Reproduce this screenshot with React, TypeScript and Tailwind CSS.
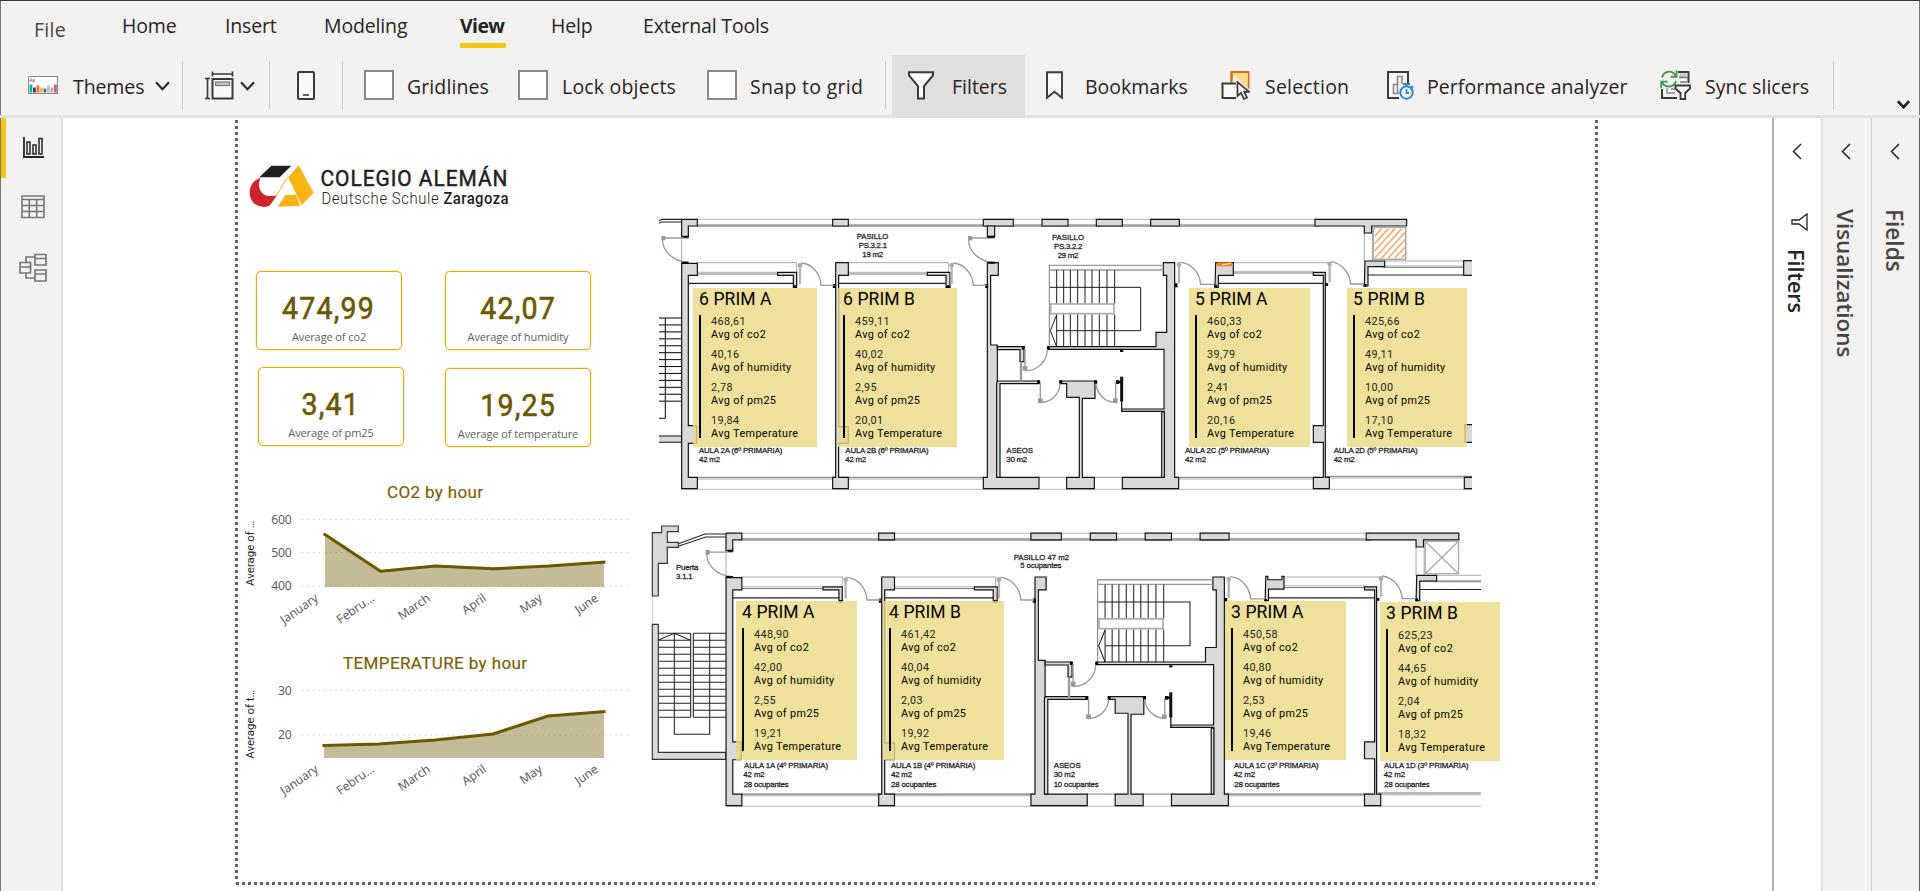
import React from "react";

/* ---------- shared drawing helpers ---------- */

const DARK = "#3b3a39";

function Chevron({ className, w = 2 }: { className?: string; w?: number }) {
  return (
    <svg viewBox="0 0 15 10" className={className} fill="none" stroke="#252423" strokeWidth={w}>
      <path d="M1 1.2 L7.5 8.2 L14 1.2" />
    </svg>
  );
}

function Sep({ className }: { className: string }) {
  return <div className={`h-12 w-px shrink-0 bg-[#c8c6c4] ${className}`} />;
}

function Check({ className = "" }: { className?: string }) {
  return <div className={`h-[30px] w-[30px] shrink-0 border-2 border-[#8a8886] bg-white ${className}`} />;
}

function Label({ className, children }: { className: string; children: React.ReactNode }) {
  return <span className={`shrink-0 whitespace-nowrap ${className}`}>{children}</span>;
}

function ToolLabel({ className, children }: { className: string; children: React.ReactNode }) {
  return <span className={`shrink-0 pt-[3px] whitespace-nowrap ${className}`}>{children}</span>;
}

/* ---------- ribbon ---------- */

function ThemesIcon() {
  const bars: [number, number, string][] = [
    [1.5, 8, "#01b8aa"],
    [5, 5, "#374649"],
    [8.5, 7, "#fd625e"],
    [12, 5, "#f2c80f"],
    [15.5, 4, "#5f6b6d"],
    [19, 7, "#8ad4eb"],
    [22.5, 5, "#fe9666"],
    [26, 8, "#a66999"],
  ];
  return (
    <svg viewBox="0 0 30 18" className="ml-7 h-[18px] w-[30px] shrink-0">
      <rect x="0.5" y="0.5" width="29" height="17" fill="#fff" stroke="#8a8886" />
      <text x="1" y="6" fontSize="5" fill="#605e5c" fontFamily="Liberation Sans, sans-serif">Aa</text>
      {bars.map(([x, h, c]) => (
        <rect key={x} x={x} y={16.5 - h} width="2.8" height={h} fill={c} />
      ))}
    </svg>
  );
}

function PageViewIcon() {
  return (
    <svg viewBox="0 0 29 29" className="ml-[22px] h-[29px] w-[29px] shrink-0" fill="none" stroke={DARK} strokeWidth="2">
      <rect x="7.5" y="8" width="20" height="19.5" fill="#fafafa" />
      <rect x="10.5" y="11" width="14" height="3.5" fill="#c8c6c4" stroke="#797775" strokeWidth="1.2" />
      <path d="M7 3H28M7.5 0.5V5.5M27.5 0.5V5.5M2.5 8V27.5M0 7.5H5M0 27.5H5" strokeWidth="1.7" />
    </svg>
  );
}

function PhoneIcon() {
  return (
    <svg viewBox="0 0 18 29" className="ml-[27px] h-[29px] w-[18px] shrink-0" fill="none" stroke={DARK} strokeWidth="2">
      <rect x="1" y="1" width="16" height="27" rx="1" fill="#fafafa" />
      <path d="M6 24H12" strokeWidth="1.6" />
    </svg>
  );
}

function FunnelIcon() {
  return (
    <svg viewBox="0 0 26 29" className="ml-4 h-[29px] w-[26px] shrink-0" fill="#fafafa" stroke={DARK} strokeWidth="2">
      <path d="M1 1.2H25V4.5L16 15.2V27.5H10V15.2L1 4.5Z" />
    </svg>
  );
}

function BookmarkIcon() {
  return (
    <svg viewBox="0 0 17 29" className="ml-[21px] h-[29px] w-[17px] shrink-0" fill="#fafafa" stroke={DARK} strokeWidth="1.9">
      <path d="M1 1.2H16V26.8L8.5 20.8L1 26.8Z" />
    </svg>
  );
}

function SelectionIcon() {
  return (
    <svg viewBox="0 0 29 30" className="h-[30px] w-[29px] shrink-0">
      <rect x="10.5" y="2" width="17" height="17" fill="#f8db8f" stroke="#d8700d" strokeWidth="2" />
      <path d="M10 14L14 4L29 20L29 30H14Z" fill="#f3f2f1" />
      <path d="M10.5 13V2H15" fill="none" stroke="#d8700d" strokeWidth="2" />
      <path d="M11.5 3H27L26.5 18.5Z" fill="#f8db8f" />
      <rect x="1.5" y="13.5" width="15" height="14.5" fill="#fafafa" stroke={DARK} strokeWidth="2" />
      <path d="M15 10L29.5 25L24 30H15Z" fill="#f3f2f1" />
      <path d="M16.5 12V26L20 22.8L23 29L26 27.6L23.2 21.8H28Z" fill="#fafafa" stroke={DARK} strokeWidth="1.7" />
    </svg>
  );
}

function PerformanceIcon() {
  return (
    <svg viewBox="0 0 27 30" className="h-[30px] w-[27px] shrink-0" fill="none">
      <path d="M12 28H1V2H21V13" fill="#fafafa" stroke={DARK} strokeWidth="2" />
      <path d="M12 23.5H6.5V14.5H10.5M10.5 23V6.5H15V14" stroke="#8a8886" strokeWidth="1.6" />
      <circle cx="19.5" cy="22.5" r="6.2" fill="#fafafa" stroke="#2488c8" strokeWidth="2" />
      <path d="M16 14H23M19.5 14V16M24 16L26 18M19.5 19V23H22" stroke="#2488c8" strokeWidth="1.8" />
    </svg>
  );
}

function SyncIcon() {
  return (
    <svg viewBox="0 0 31 30" className="h-[30px] w-[31px] shrink-0" fill="none">
      <path d="M18 2H28.5V13M2 19V28H17" stroke={DARK} strokeWidth="2" />
      <path d="M20 3.5H27.5V7H20Z" fill="#c8c6c4" />
      <path d="M19 7.5H28M20 12H27" stroke="#797775" strokeWidth="1.5" />
      <path d="M7 18.5V23H15M11 19H15" stroke="#8a8886" strokeWidth="1.5" />
      <path d="M2 7.5C4 0.5 12 -0.5 16 6M16.5 0.5V6.8H10.5" stroke="#3a9a50" strokeWidth="1.9" />
      <path d="M16 11C14 17.5 6 18.5 2 12.5M1.2 17.8V11.6H7.5" stroke="#3a9a50" strokeWidth="1.9" />
      <path d="M15.5 15.5H30V18.5L25.2 23V29H20.5V23L15.5 18.5Z" fill="#fafafa" stroke={DARK} strokeWidth="1.9" />
    </svg>
  );
}

function Ribbon() {
  return (
    <header className="h-[118px] shrink-0 border-t border-[#3b3a39] bg-[#f3f2f1] text-[#252423] shadow-[inset_1px_0_#797775,inset_-1px_0_#797775]">
      <nav className="flex h-[54px] text-[19.5px] leading-[27px] tracking-[-0.15px]">
        <Label className="mt-[14.5px] ml-[34px] w-[88px] tracking-[0.3px] text-[#484644]">File</Label>
        <Label className="mt-[11px] w-[103px]">Home</Label>
        <Label className="mt-[11px] w-[99px]">Insert</Label>
        <Label className="mt-[11px] w-[136px]">Modeling</Label>
        <div className="mt-[11px] mr-[45px] flex w-[46px] shrink-0 flex-col">
          <Label className="font-bold tracking-[-0.6px]">View</Label>
          <div className="mt-1 h-[5px] bg-[#f2c811]" />
        </div>
        <Label className="mt-[11px] w-[92px]">Help</Label>
        <Label className="mt-[11px]">External Tools</Label>
      </nav>
      <div className="flex h-[60px] items-center text-[19.5px] tracking-[0px]">
        <ThemesIcon />
        <ToolLabel className="ml-[15px] w-[82px] tracking-[-0.1px]">Themes</ToolLabel>
        <Chevron className="mt-[2px] h-[10px] w-[15px] shrink-0" />
        <Sep className="ml-3" />
        <PageViewIcon />
        <Chevron className="mt-[2px] ml-1.5 h-[10px] w-[15px] shrink-0" />
        <Sep className="ml-3.5" />
        <PhoneIcon />
        <Sep className="ml-[27px]" />
        <Check className="ml-[21px]" />
        <ToolLabel className="ml-[13px] w-[111px] tracking-[0.1px]">Gridlines</ToolLabel>
        <Check />
        <ToolLabel className="ml-3.5 w-[145px] tracking-[0.2px]">Lock objects</ToolLabel>
        <Check />
        <ToolLabel className="ml-[13px] w-[135px] tracking-[0.3px]">Snap to grid</ToolLabel>
        <Sep className="" />
        <div className="ml-1.5 flex h-full w-[133px] shrink-0 items-center bg-[#e1dfdd]">
          <FunnelIcon />
          <ToolLabel className="ml-[18px]">Filters</ToolLabel>
        </div>
        <BookmarkIcon />
        <ToolLabel className="ml-[22px] w-[136px]">Bookmarks</ToolLabel>
        <SelectionIcon />
        <ToolLabel className="ml-[15px] w-[122px] tracking-[0.2px]">Selection</ToolLabel>
        <PerformanceIcon />
        <ToolLabel className="ml-[13px] w-[233px] tracking-[0.05px]">Performance analyzer</ToolLabel>
        <SyncIcon />
        <ToolLabel className="ml-3.5 w-[128px] tracking-[0.05px]">Sync slicers</ToolLabel>
        <Sep className="" />
        <Chevron w={3.2} className="mt-[39px] ml-[63px] h-[9px] w-[13px] shrink-0" />
      </div>
      <div className="h-[3px] bg-[#e4e2e0]" />
    </header>
  );
}

/* ---------- left rail ---------- */

function Rail() {
  return (
    <aside className="flex w-[63px] shrink-0 border-r-2 border-[#e1dfdd] bg-[#f3f2f1] shadow-[inset_1px_0_#797775]">
      <div className="ml-px h-[60px] w-[5px] bg-[#f2c811]" />
      <div className="flex w-[54px] flex-col items-center">
        <svg viewBox="0 0 21 21" className="mt-[19px] h-[21px] w-[21px]" fill="none" stroke="#252423" strokeWidth="1.5">
          <path d="M1 0V20H21" strokeWidth="1.8" />
          <rect x="4" y="5" width="3" height="12" />
          <rect x="10" y="8" width="3" height="9" />
          <rect x="16" y="1.5" width="3" height="15.5" />
        </svg>
        <svg viewBox="0 0 24 24" className="mt-[37px] h-[24px] w-[24px]" fill="none" stroke="#797775" strokeWidth="1.6">
          <path d="M1 1H23V22.5H1ZM1 4.5H23M1 10.5H23M1 16.5H23M8.3 4.5V22.5M15.7 4.5V22.5" />
        </svg>
        <svg viewBox="0 0 28 29" className="mt-[34px] h-[29px] w-[28px]" fill="none" stroke="#797775" strokeWidth="1.7">
          <path d="M1 9.5H11.5V20H1ZM1 14H11.5M16 1.5H27V12H16ZM16 5.5H27M16 17H27V28H16ZM16 21H27M7 9.5V4H16M7 20V25H16" />
        </svg>
      </div>
    </aside>
  );
}

/* ---------- left column of the report ---------- */

function Logo() {
  return (
    <svg viewBox="238 118 402 153" className="h-[153px] w-[402px]" fontFamily="Roboto, sans-serif">
      <g transform="translate(230 140) scale(0.33333)">
        <path d="M124 77H184L149 112H88Z" fill="#231f20" />
        <path d="M92 113C70 120 59 139 59 158C60 184 78 201 102 201C112 200 117 198 121 194L142 164C132 170 114 169 104 165C88 156 82 134 92 113Z" fill="#d2232a" />
        <path d="M206 76L251 158L215 196L174 112Z" fill="#fcb415" />
        <path d="M172 113L140 166" stroke="#fcb415" strokeWidth="3" />
        <path d="M166 165H198L211 198L143 200Z" fill="#fcb415" />
      </g>
      <g transform="translate(320.5 186) scale(0.93 1)">
        <text fontSize="22.5" fill="#231f20" stroke="#231f20" strokeWidth="0.5" textLength="201">COLEGIO ALEMÁN</text>
      </g>
      <g transform="translate(321.5 204) scale(0.93 1)">
        <text fontSize="16" fontWeight="300" fill="#231f20" textLength="126">Deutsche Schule</text>
      </g>
      <g transform="translate(443.5 204) scale(0.93 1)">
        <text fontSize="16" fontWeight="500" fill="#231f20" textLength="70">Zaragoza</text>
      </g>
    </svg>
  );
}

function Kpi({ value, label, className = "" }: { value: string; label: string; className?: string }) {
  return (
    <div
      className={`flex h-[79px] w-[146px] flex-col items-center rounded-[5px] border border-[#d9b300] shadow-[0_0_1.5px_#d9b300] ${className}`}
    >
      <span className="mt-[18.5px] scale-x-[0.92] font-[Roboto] text-[31px] leading-[36px] tracking-[1.3px] text-[#6b5800] [-webkit-text-stroke:0.6px_#6b5800]">
        {value}
      </span>
      <span className="mt-[2px] text-[11px] leading-[16px] tracking-[-0.1px] whitespace-nowrap text-[#605e5c]">{label}</span>
    </div>
  );
}

type Pt = [number, number];

function AreaChart({
  title,
  x1,
  x2,
  axis,
  ticks,
  points,
  base,
  top,
  labelY,
}: {
  title: string;
  x1: number;
  x2: number;
  axis: string;
  ticks: { y: number; text: string }[];
  points: Pt[];
  base: number;
  top: number;
  labelY: number;
}) {
  const line = points.map((p) => p.join(",")).join(" ");
  const months = ["January", "Febru…", "March", "April", "May", "June"];
  const mid = (ticks[0].y + base) / 2;
  return (
    <svg viewBox={`238 ${top} 402 171`} className="h-[171px] w-[402px]" fontFamily="Noto Sans, sans-serif">
      <text x={x1} y={top + 39} fontSize="17" textLength={x2 - x1} fill="#7a6200" stroke="#7a6200" strokeWidth="0.2" fontFamily="Roboto, sans-serif">
        {title}
      </text>
      {ticks.map((t) => (
        <g key={t.text}>
          <line x1="302" x2="628" y1={t.y} y2={t.y} stroke="#c8c6c4" strokeWidth="1" strokeDasharray="1.2 4.4" />
          <text x="291.5" y={t.y + 4.2} fontSize="12.2" textAnchor="end" letterSpacing="-0.2" fill="#605e5c">
            {t.text}
          </text>
        </g>
      ))}
      <polygon points={`${points[0][0]},${base} ${line} ${points[5][0]},${base}`} fill="#6b5800" fillOpacity="0.4" />
      <polyline points={line} fill="none" stroke="#6b5800" strokeWidth="3" strokeLinecap="square" strokeLinejoin="round" />
      {months.map((m, i) => (
        <text
          key={m}
          x={319 + i * 56}
          y={labelY}
          fontSize="12.2"
          textAnchor="end"
          letterSpacing="-0.1"
          fill="#605e5c"
          transform={`rotate(-35 ${319 + i * 56} ${labelY})`}
        >
          {m}
        </text>
      ))}
      <text x="253.5" y={mid} fontSize="11.5" textAnchor="middle" fill="#252423" fontFamily="Roboto, sans-serif" transform={`rotate(-90 253.5 ${mid})`}>
        {axis}
      </text>
    </svg>
  );
}

/* ---------- floor plans ---------- */

function PlanText({ x1, x2, y, children }: { x1: number; x2: number; y: number; children: string }) {
  return (
    <text x={x1} y={y} textLength={x2 - x1} fontSize="23.5" fill="#222" stroke="#222" strokeWidth="0.8" fontFamily="Liberation Sans, sans-serif">
      {children}
    </text>
  );
}

function Stairs() {
  const xs = [1250, 1271, 1291, 1313, 1335, 1356, 1378, 1401, 1424];
  return (
    <g fill="none" stroke="#1a1a1a" strokeWidth="3">
      <path d="M1228 440V195" stroke="#777" />
      <path d="M1228 196H1570M1228 210H1570" stroke="#999" strokeWidth="4" />
      {xs.map((x) => (
        <path key={x} d={`M${x} 210V311M${x} 343V440`} />
      ))}
      <path d="M1230 262H1502V392H1250" />
      <path d="M1250 345L1231 392L1250 440" />
      <rect x="1232" y="312" width="190" height="29" fill="#fff" stroke="#aaa" strokeWidth="5" />
    </g>
  );
}

function Door({ x, y, h, arc }: { x: number; y: number; h: number; arc: string }) {
  return (
    <g fill="none" stroke="#999" strokeWidth="4">
      <path d={`M${x} ${y}V${y + h}`} strokeWidth="7" stroke="#b5b5b5" />
      <path d={arc} />
      <circle cx={x} cy={y + 6} r="7" fill="#aaa" stroke="none" />
    </g>
  );
}

/* One storey of the building: both floors share this layout. */
function Storey({ upper }: { upper: boolean }) {
  return (
    <g strokeLinejoin="miter">
      {/* façade lines */}
      <g fill="none" stroke="#aaa" strokeWidth="3">
        <path d="M170 58H2040M125 868H2500" stroke="#b5b5b5" />
        <path d="M170 74H2040" />
        <path d="M170 78H2040" stroke="#555" />
        <path d="M170 188H470V220M625 188H925V220M1780 188H2068M2230 183H2500" />
        <path d="M172 217H415M625 217H865M1780 214H2022M2230 198H2475" stroke="#b5b5b5" />
        <path d="M172 222H415M625 222H865M1780 219H2022M2230 202H2475" stroke="#777" />
        <path d="M170 832H1035M1604 832H2040M2060 829H2500" stroke="#777" />
        <path d="M170 837H1035M1604 837H2040M2060 834H2500" stroke="#aaa" />
        <path d="M1195 832H1285M1360 832H1450" stroke="#999" />
        <path d="M125 110V190M2173 98V184M2197 78V184" stroke="#aaa" />
      </g>
      <path d="M145 250H460M596 250H918M1735 250H2052M2184 225H2500" fill="none" stroke="#222" strokeWidth="3.5" />

      {/* poché walls */}
      <g fill="#d9d9d9" stroke="#111" strokeWidth="3.5">
        <path d="M125 58H172V78H145V110H125Z" />
        <path d="M578 58H625V78H578Z" />
        <path d="M1030 58H1120V78H1030Z" />
        {upper && <path d="M1042 78H1064V110H1042Z" />}
        <path d="M1206 58H1284V78H1206ZM1369 58H1447V78H1369ZM1532 58H1618V78H1532Z" />
        <path d="M2025 58H2300V78H2195V99H2173V78H2025Z" />
        <path d="M125 190H172V226H145V677H170V730H145V832H172V866H125Z" />
        <path d="M413 217H470V262H460V226H413Z" />
        <path d="M587 188H625V226H596V680H625V730H596V832H625V866H578V832H587Z" />
        <path d="M862 217H930V262H918V226H862Z" />
        <path d="M1042 188H1075V226H1052V435H1072V832H1197V866H1030V832H1042Z" />
        <path d="M1570 188H1604V832H1616V866H1447V832H1572V634H1445V627H1572V448H1225V440H1548V397H1580V226H1570Z" />
        <path d="M1072 440H1152V485H1140V449H1072Z" />
        <path d="M1072 543H1196V551H1080V832H1070V551Z" />
        <path d="M1262 543H1365V595H1327V832H1363V866H1280V832H1318V592H1280V551H1262Z" />
        <path d="M1565 636V832H1573V636Z" />
        {upper ? (
          <path d="M1727 188H1780V226H1735V262H1725Z" />
        ) : (
          <path d="M1727 186H1733V196H1775V186H1781V224H1735V258H1725Z" />
        )}
        <path d="M2020 217H2056V832H2068V866H2020V832H2050V727H2020V677H2050V226H2020Z" />
        <path d="M2175 183H2234V200H2184V258H2173Z" />
        {upper && <path d="M2471 182H2510V226H2471ZM2475 674H2510V727H2475ZM2473 832H2510V866H2473Z" />}
        <path d="M1445 530V605" strokeWidth="9" />
        <path d="M1445 450V456" strokeWidth="10" />
      </g>
      <path d="M1445 605V634" stroke="#222" strokeWidth="4" />
      <path d="M1143 485V545" stroke="#999" strokeWidth="7" />
      <path
        d="M583 252V264M1040 252V264M1196 541V552M1262 541V552M1367 541V552M1432 541V552M1225 439V449M1150 439V449M1608 250V262M2060 250V258M466 256V264M924 256V264M1727 254V262M2175 252V260"
        stroke="#000"
        strokeWidth="9"
      />
      <path d="M1430 546H1446" stroke="#111" strokeWidth="8" />

      <Door x={480} y={190} h={62} arc="M484 189C520 192 542 225 543 256H584" />
      <Door x={935} y={190} h={62} arc="M940 189C976 192 998 225 1000 256H1040" />
      <Door x={1617} y={188} h={62} arc="M1622 187C1658 190 1680 222 1682 253H1722" />
      <Door x={2069} y={186} h={62} arc="M2073 185C2108 190 2130 222 2132 252H2172" />
      <g fill="none" stroke="#999" strokeWidth="4">
        <path d="M68 117C66 150 95 184 145 187M66 114H145" />
        {upper && <path d="M986 117C984 150 1013 184 1060 187M984 114H1064" />}
        <path d="M1155 445V512C1190 514 1222 485 1222 448" />
        <path d="M1201 548V607C1235 608 1260 580 1260 550" />
        <path d="M1368 550C1370 580 1395 608 1427 607V548" />
      </g>
      <g fill="#999">
        <path d="M64 108H77V121H64ZM1148 498H1162V512H1148ZM1194 595H1208V609H1194ZM1419 595H1433V609H1419Z" />
        {upper && <path d="M984 108H997V121H984Z" />}
      </g>
      <path d="M125 188H146M130 110H146" stroke="#000" strokeWidth="6" />
      {upper && <path d="M1045 188H1066M1042 110H1064" stroke="#000" strokeWidth="6" />}
      <Stairs />
    </g>
  );
}

function UpperPlan() {
  const steps = Array.from({ length: 13 }, (_, i) => 354 + i * 20.8);
  const hatch = Array.from({ length: 10 }, (_, i) => i * 20);
  return (
    <svg viewBox="640 210 832 284" className="h-[284px] w-[832px]">
      <defs>
        <clipPath id="hatchBox">
          <rect x="2204" y="86" width="90" height="88" />
        </clipPath>
      </defs>
      <g transform="translate(640 200) scale(0.33333)">
        <path d="M57 70L64 66H125M57 62L66 58H125" fill="none" stroke="#222" strokeWidth="3.5" />
        <g stroke="#111" strokeWidth="3.2" fill="none">
          {steps.map((y) => (
            <path key={y} d={`M57 ${y}H125`} />
          ))}
          <path d="M76 354V655H57" />
          <path d="M57 708H125V727H57" fill="#d9d9d9" />
        </g>
        <Storey upper />
        <rect x="1731" y="187" width="45" height="12" fill="#ff7f0e" />
        <path d="M1746 195L1772 190" stroke="#fff" strokeWidth="3" />
        <rect x="2200" y="82" width="97" height="96" fill="#fff" stroke="#aaa" strokeWidth="5" />
        <g clipPath="url(#hatchBox)" stroke="#fb9b45" strokeWidth="4">
          {hatch.map((d) => (
            <path key={d} d={`M${2194 + d - 80} ${186}L${2194 + d + 20} ${76}`} />
          ))}
        </g>
        <PlanText x1={650} x2={745} y={116}>PASILLO</PlanText>
        <PlanText x1={656} x2={741} y={143}>PS.3.2.1</PlanText>
        <PlanText x1={667} x2={729} y={170}>19 m2</PlanText>
        <PlanText x1={1236} x2={1332} y={121}>PASILLO</PlanText>
        <PlanText x1={1242} x2={1327} y={148}>PS.3.2.2</PlanText>
        <PlanText x1={1253} x2={1315} y={175}>29 m2</PlanText>
        <PlanText x1={177} x2={427} y={758}>AULA 2A (6º PRIMARIA)</PlanText>
        <PlanText x1={177} x2={240} y={785}>42 m2</PlanText>
        <PlanText x1={616} x2={866} y={758}>AULA 2B (6º PRIMARIA)</PlanText>
        <PlanText x1={616} x2={678} y={785}>42 m2</PlanText>
        <PlanText x1={1099} x2={1179} y={758}>ASEOS</PlanText>
        <PlanText x1={1099} x2={1161} y={785}>30 m2</PlanText>
        <PlanText x1={1635} x2={1887} y={758}>AULA 2C (5º PRIMARIA)</PlanText>
        <PlanText x1={1635} x2={1698} y={785}>42 m2</PlanText>
        <PlanText x1={2081} x2={2333} y={758}>AULA 2D (5º PRIMARIA)</PlanText>
        <PlanText x1={2081} x2={2144} y={785}>42 m2</PlanText>
      </g>
    </svg>
  );
}

function LowerPlan() {
  const steps = Array.from({ length: 13 }, (_, i) => 370 + i * 21);
  return (
    <svg viewBox="640 520 841 290" className="h-[290px] w-[841px]">
      <g transform="translate(640 510) scale(0.33333)">
        <g stroke="#222" strokeWidth="3.2" fill="none">
          {steps.map((y) => (
            <path key={y} d={`M55 ${y}H152M160 ${y}H257`} />
          ))}
          <path d="M103 370V673H209V370M152 370V622M160 370V622M55 390L103 370L150 390" />
          <path d="M115 109L197 81H257M115 101L195 72H257" />
          <path d="M38 258V343" stroke="#ccc" />
        </g>
        <g fill="#d9d9d9" stroke="#333" strokeWidth="3.5">
          <path d="M37 68H65V48H115V65H82V97H115V112H82V160H55V258H37Z" />
          <path d="M37 343H55V727H257V748H37Z" />
        </g>
      </g>
      <g transform="translate(37 311.4) scale(1.0108 1.0113)">
        <g transform="translate(640 200) scale(0.33333)">
          <Storey upper={false} />
          <path d="M2200 82H2299V178H2200ZM2200 82L2299 178M2299 82L2200 178" fill="none" stroke="#aaa" strokeWidth="4" />
        </g>
      </g>
      <g transform="translate(640 510) scale(0.33333)">
        <PlanText x1={108} x2={175} y={181}>Puerta</PlanText>
        <PlanText x1={108} x2={158} y={208}>3.1.1</PlanText>
        <PlanText x1={1121} x2={1287} y={149}>PASILLO 47 m2</PlanText>
        <PlanText x1={1141} x2={1264} y={175}>5 ocupantes</PlanText>
        <PlanText x1={312} x2={564} y={775}>AULA 1A (4º PRIMARIA)</PlanText>
        <PlanText x1={310} x2={374} y={802}>42 m2</PlanText>
        <PlanText x1={311} x2={446} y={830}>28 ocupantes</PlanText>
        <PlanText x1={753} x2={1006} y={775}>AULA 1B (4º PRIMARIA)</PlanText>
        <PlanText x1={753} x2={816} y={802}>42 m2</PlanText>
        <PlanText x1={753} x2={889} y={830}>28 ocupantes</PlanText>
        <PlanText x1={1241} x2={1322} y={775}>ASEOS</PlanText>
        <PlanText x1={1241} x2={1305} y={802}>30 m2</PlanText>
        <PlanText x1={1241} x2={1376} y={830}>10 ocupantes</PlanText>
        <PlanText x1={1782} x2={2036} y={775}>AULA 1C (3º PRIMARIA)</PlanText>
        <PlanText x1={1781} x2={1845} y={802}>42 m2</PlanText>
        <PlanText x1={1783} x2={1919} y={830}>28 ocupantes</PlanText>
        <PlanText x1={2232} x2={2486} y={775}>AULA 1D (3º PRIMARIA)</PlanText>
        <PlanText x1={2231} x2={2295} y={802}>42 m2</PlanText>
        <PlanText x1={2233} x2={2369} y={830}>28 ocupantes</PlanText>
      </g>
    </svg>
  );
}

type Room = { name: string; place: string; values: [string, string, string, string] };

const METRICS = ["Avg of co2", "Avg of humidity", "Avg of pm25", "Avg Temperature"];

const UPPER_ROOMS: Room[] = [
  { name: "6 PRIM A", place: "left-[53px] top-[77.5px] w-[124px] pl-[6px]", values: ["468,61", "40,16", "2,78", "19,84"] },
  { name: "6 PRIM B", place: "left-[198px] top-[77.5px] w-[119px] pl-[5px]", values: ["459,11", "40,02", "2,95", "20,01"] },
  { name: "5 PRIM A", place: "left-[549px] top-[77.5px] w-[121px] pl-[6px]", values: ["460,33", "39,79", "2,41", "20,16"] },
  { name: "5 PRIM B", place: "left-[707px] top-[77.5px] w-[120px] pl-[6px]", values: ["425,66", "49,11", "10,00", "17,10"] },
];

const LOWER_ROOMS: Room[] = [
  { name: "4 PRIM A", place: "left-[96px] top-[81px] w-[121px] pl-[6px]", values: ["448,90", "42,00", "2,55", "19,21"] },
  { name: "4 PRIM B", place: "left-[243px] top-[81px] w-[121px] pl-[6px]", values: ["461,42", "40,04", "2,03", "19,92"] },
  { name: "3 PRIM A", place: "left-[585px] top-[81px] w-[121px] pl-[6px]", values: ["450,58", "40,80", "2,53", "19,46"] },
  { name: "3 PRIM B", place: "left-[740px] top-[82px] w-[120px] pl-[6px]", values: ["625,23", "44,65", "2,04", "18,32"] },
];

function RoomCard({ room }: { room: Room }) {
  return (
    <div className={`absolute h-[159px] bg-[#ebd882]/80 font-[Roboto] text-black ${room.place}`}>
      <div className="pt-[1px] text-[17.5px] leading-[20px] tracking-[0.1px] whitespace-nowrap">{room.name}</div>
      <div className="mt-[6px] h-[123px] border-l-2 border-black pl-[10px]">
        {METRICS.map((m, i) => (
          <div key={m} className="h-[33px] text-[10.8px] leading-[13px] tracking-[0.4px] whitespace-nowrap">
            <div className="text-[#252423]">{room.values[i]}</div>
            <div>{m}</div>
          </div>
        ))}
      </div>
    </div>
  );
}

/* ---------- report page ---------- */

const EDGE_V = "mt-[2px] w-[3px] shrink-0 bg-[repeating-linear-gradient(180deg,#605e5c_0_3px,transparent_3px_6px)]";

function ReportPage() {
  return (
    <div className="ml-[172px] flex h-[767px] w-[1363px] shrink-0 flex-col">
      <div className="flex h-[764px]">
        <div className={EDGE_V} />
        <div className="flex w-[402px] shrink-0 flex-col">
          <Logo />
          <div className="flex pl-[18px]">
            <div className="flex w-[189px] flex-col gap-[17px]">
              <Kpi value="474,99" label="Average of co2" />
              <Kpi value="3,41" label="Average of pm25" className="ml-[2px]" />
            </div>
            <div className="flex flex-col gap-[18px]">
              <Kpi value="42,07" label="Average of humidity" />
              <Kpi value="19,25" label="Average of temperature" />
            </div>
          </div>
          <div className="mt-[12px] flex flex-col">
            <AreaChart
              title="CO2 by hour"
              x1={387}
              x2={483}
              axis="Average of …"
              top={459}
              ticks={[
                { y: 519.5, text: "600" },
                { y: 552.5, text: "500" },
                { y: 586, text: "400" },
              ]}
              points={[
                [325, 534.5],
                [380.5, 571.3],
                [435.5, 566],
                [493, 568.7],
                [549, 566],
                [604, 562],
              ]}
              base={587}
              labelY={600}
            />
            <AreaChart
              title="TEMPERATURE by hour"
              x1={343}
              x2={527}
              axis="Average of t…"
              top={630}
              ticks={[
                { y: 690.5, text: "30" },
                { y: 735, text: "20" },
              ]}
              points={[
                [324, 745.5],
                [379, 744],
                [435, 740],
                [493, 734],
                [548, 716],
                [604, 711.5],
              ]}
              base={758}
              labelY={771}
            />
          </div>
        </div>
        <div className="flex w-[955px] shrink-0 flex-col">
          <div className="relative mt-[92px] h-[284px]">
            <UpperPlan />
            {UPPER_ROOMS.map((r) => (
              <RoomCard key={r.name} room={r} />
            ))}
          </div>
          <div className="relative mt-[26px] h-[290px]">
            <LowerPlan />
            {LOWER_ROOMS.map((r) => (
              <RoomCard key={r.name} room={r} />
            ))}
          </div>
        </div>
        <div className={EDGE_V} />
      </div>
      <div className="h-[3px] bg-[repeating-linear-gradient(90deg,transparent_0_1px,#605e5c_1px_4px,transparent_4px_6px)]" />
    </div>
  );
}

/* ---------- collapsed panes ---------- */

function PaneChevron({ className }: { className: string }) {
  return (
    <svg viewBox="0 0 10 17" className={`h-[17px] w-[10px] ${className}`} fill="none" stroke="#252423" strokeWidth="1.5">
      <path d="M9 1L1.5 8.5L9 16" />
    </svg>
  );
}

function Panes() {
  return (
    <div className="ml-auto flex shrink-0">
      <div className="flex w-[49px] flex-col border-l-2 border-[#b3b0ad] bg-white">
        <PaneChevron className="mt-[25px] ml-[18px]" />
        <svg viewBox="0 0 17 18" className="mt-[53px] ml-[17px] h-[18px] w-[17px]" fill="none" stroke="#252423" strokeWidth="1.3">
          <path d="M16 1V17L8 11H1V7H8Z" />
        </svg>
        <div className="mt-[18px] mr-[11px] h-[80px] text-[21.5px] leading-[28px] font-semibold text-[#252423] [writing-mode:vertical-rl]">Filters</div>
      </div>
      <div className="flex w-[50px] flex-col border-l-2 border-[#e1dfdd] bg-[#f3f2f1]">
        <PaneChevron className="mt-[25px] ml-[18px]" />
        <div className="mt-[49px] mr-[12px] h-[180px] text-[22.4px] leading-[28px] font-semibold text-[#484644] [writing-mode:vertical-rl]">Visualizations</div>
      </div>
      <div className="flex w-[49px] flex-col border-r border-l border-r-[#605e5c] border-l-[#d2d0ce] bg-[#f3f2f1]">
        <PaneChevron className="mt-[25px] ml-[18px]" />
        <div className="mt-[49px] mr-[11px] h-[100px] text-[22.6px] leading-[28px] font-semibold text-[#484644] [writing-mode:vertical-rl]">Fields</div>
      </div>
    </div>
  );
}

export default function App() {
  return (
    <div className="flex h-[891px] w-full flex-col overflow-hidden bg-white font-['Open_Sans','Noto_Sans',sans-serif]">
      <Ribbon />
      <main className="flex min-h-0 flex-1">
        <Rail />
        <ReportPage />
        <Panes />
      </main>
    </div>
  );
}
